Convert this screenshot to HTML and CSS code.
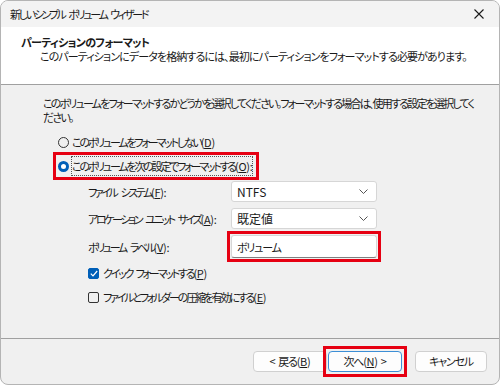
FILE: index.html
```html
<!DOCTYPE html>
<html lang="ja">
<head>
  <meta charset="UTF-8">
  <title>新しいシンプル ボリューム ウィザード</title>
  <link rel="stylesheet" href="styles.css">
</head>
<body>
<div class="window">
  <div class="titlebar">
    <span class="title">新しいシンプル ボリューム ウィザード</span>
    <svg class="close" width="10" height="10" viewBox="0 0 10 10">
      <path d="M0.5 0.5 L9.5 9.5 M9.5 0.5 L0.5 9.5" stroke="#1a1a1a" stroke-width="1.1"/>
    </svg>
  </div>

  <div class="header">
    <h1>パーティションのフォーマット</h1>
    <p>このパーティションにデータを格納するには、最初にパーティションをフォーマットする必要があります。</p>
  </div>

  <div class="content">
    <p class="intro">このボリュームをフォーマットするかどうかを選択してください。フォーマットする場合は、使用する設定を選択してく<br>ださい。</p>

    <div class="option">
      <span class="radio"></span>
      <span>このボリュームをフォーマットしない<span class="key">(<u>D</u>)</span></span>
    </div>

    <div class="option mark">
      <span class="radio checked"></span>
      <span class="focus">このボリュームを次の設定でフォーマットする<span class="key">(<u>O</u>):</span></span>
    </div>

    <div class="settings">
      <label>ファイル システム<span class="key">(<u>F</u>):</span></label>
      <div class="select">NTFS
        <svg width="9" height="5" viewBox="0 0 9 5"><path d="M0.5 0.5 L4.5 4.5 L8.5 0.5" fill="none" stroke="#555" stroke-width="1"/></svg>
      </div>

      <label>アロケーション ユニット サイズ<span class="key">(<u>A</u>):</span></label>
      <div class="select">既定値
        <svg width="9" height="5" viewBox="0 0 9 5"><path d="M0.5 0.5 L4.5 4.5 L8.5 0.5" fill="none" stroke="#555" stroke-width="1"/></svg>
      </div>

      <label>ボリューム ラベル<span class="key">(<u>V</u>):</span></label>
      <div class="mark field-mark">
        <div class="textbox">ボリューム</div>
      </div>
    </div>

    <div class="check-row">
      <span class="checkbox checked">
        <svg width="8" height="7" viewBox="0 0 8 7"><path d="M0.8 3.6 L3 5.8 L7.2 1" fill="none" stroke="#fff" stroke-width="1.2"/></svg>
      </span>
      <span>クイック フォーマットする<span class="key">(<u>P</u>)</span></span>
    </div>
    <div class="check-row">
      <span class="checkbox"></span>
      <span>ファイルとフォルダーの圧縮を有効にする<span class="key">(<u>E</u>)</span></span>
    </div>
  </div>

  <div class="footer">
    <button class="btn">&lt; 戻る<span class="key">(<u>B</u>)</span></button>
    <div class="mark btn-mark">
      <button class="btn primary">次へ<span class="key">(<u>N</u>) &gt;</span></button>
    </div>
    <button class="btn cancel">キャンセル</button>
  </div>
</div>
</body>
</html>
```

FILE: styles.css
```css
body {
  margin: 0;
  background-color: #ffffff;
  font-family: "Noto Sans CJK JP", "Noto Sans", sans-serif;
  font-size: 11px;
  font-feature-settings: "palt";
  letter-spacing: -1.8px;
  word-spacing: 2.5px;
  color: #1a1a1a;
}

.key {
  letter-spacing: -0.3px;
  word-spacing: 0;
}

.window {
  width: 500px;
  height: 385px;
  box-sizing: border-box;
  border: 1px solid #b4b4b4;
  border-radius: 8px;
  overflow: hidden;
  display: flex;
  flex-direction: column;
  background-color: #f0f0f0;
  white-space: nowrap;
}

.titlebar {
  height: 26px;
  flex: none;
  display: flex;
  align-items: center;
  justify-content: space-between;
  padding: 0 15px 0 9px;
  background-color: #f3f3f3;
}

.title {
  letter-spacing: -2.3px;
  word-spacing: 3.5px;
}

.header {
  height: 58px;
  flex: none;
  box-sizing: border-box;
  padding: 8px 0 0 20px;
  background-color: #ffffff;
  border-bottom: 1px solid #a0a0a0;
}

.header h1 {
  margin: 0;
  font-size: 11px;
  font-weight: bold;
  line-height: 14px;
  letter-spacing: -0.7px;
}

.header p {
  margin: 0 0 0 19px;
  line-height: 14px;
  letter-spacing: -0.9px;
}

.content {
  flex: 1;
  padding: 11px 0 0 42px;
  letter-spacing: -2.2px;
  word-spacing: 3px;
}

.intro {
  margin: 0;
  line-height: 14px;
  letter-spacing: -1.8px;
}

.option {
  display: flex;
  align-items: center;
  gap: 3px;
  height: 18px;
  margin-top: 9px;
  padding-left: 15px;
}

.option.mark {
  width: fit-content;
  margin-left: 15px;
  margin-top: 6px;
  padding-left: 0;
  padding-right: 2px;
}

.mark {
  outline: 3px solid #e60012;
  outline-offset: 2px;
}

.radio {
  width: 11px;
  height: 11px;
  box-sizing: border-box;
  border: 1px solid #333333;
  border-radius: 50%;
}

.radio.checked {
  border: 3px solid #005fb8;
  background-color: #ffffff;
}

.focus {
  outline: 1px dotted #555555;
  padding: 1px 0;
}

.settings {
  display: grid;
  grid-template-columns: 143px 146px;
  grid-template-rows: 21px 21px 23px;
  row-gap: 6px;
  align-items: center;
  margin: 6px 0 0 45px;
}

.settings label {
  letter-spacing: -2.4px;
  word-spacing: 4px;
}

.select,
.textbox {
  height: 100%;
  box-sizing: border-box;
  display: flex;
  align-items: center;
  justify-content: space-between;
  padding: 0 8px 0 5px;
  background-color: #ffffff;
  border: 1px solid #d6d6d6;
  border-radius: 3px;
}

.select {
  letter-spacing: 0;
  font-size: 12px;
}

.field-mark {
  height: 100%;
  outline-offset: 1px;
}

.textbox {
  border-bottom: 1px solid #808080;
  letter-spacing: -1.2px;
}

.check-row {
  display: flex;
  align-items: center;
  gap: 4px;
  height: 18px;
  margin: 6px 0 0 45px;
}

.check-row + .check-row {
  margin-top: 6px;
}

.checkbox {
  width: 11px;
  height: 11px;
  box-sizing: border-box;
  border: 1px solid #333333;
  border-radius: 2px;
  display: flex;
  align-items: center;
  justify-content: center;
}

.checkbox.checked {
  border-color: #005fb8;
  background-color: #005fb8;
}

.footer {
  height: 46px;
  flex: none;
  box-sizing: border-box;
  display: flex;
  align-items: center;
  padding: 0 0 1px 252px;
  border-top: 1px solid #a0a0a0;
}

.btn-mark {
  display: flex;
  margin-left: 1px;
}

.btn {
  width: 74px;
  height: 21px;
  padding: 0;
  font-family: inherit;
  font-size: 11px;
  font-feature-settings: "palt";
  letter-spacing: -1.2px;
  word-spacing: 2.5px;
  color: #1a1a1a;
  background-color: #fdfdfd;
  border: 1px solid #d0d0d0;
  border-radius: 4px;
}

.btn .key {
  word-spacing: 1px;
}

.btn.primary {
  border-color: #3d8fd6;
}

.btn.cancel {
  width: 72px;
  margin-left: 13px;
}
```
